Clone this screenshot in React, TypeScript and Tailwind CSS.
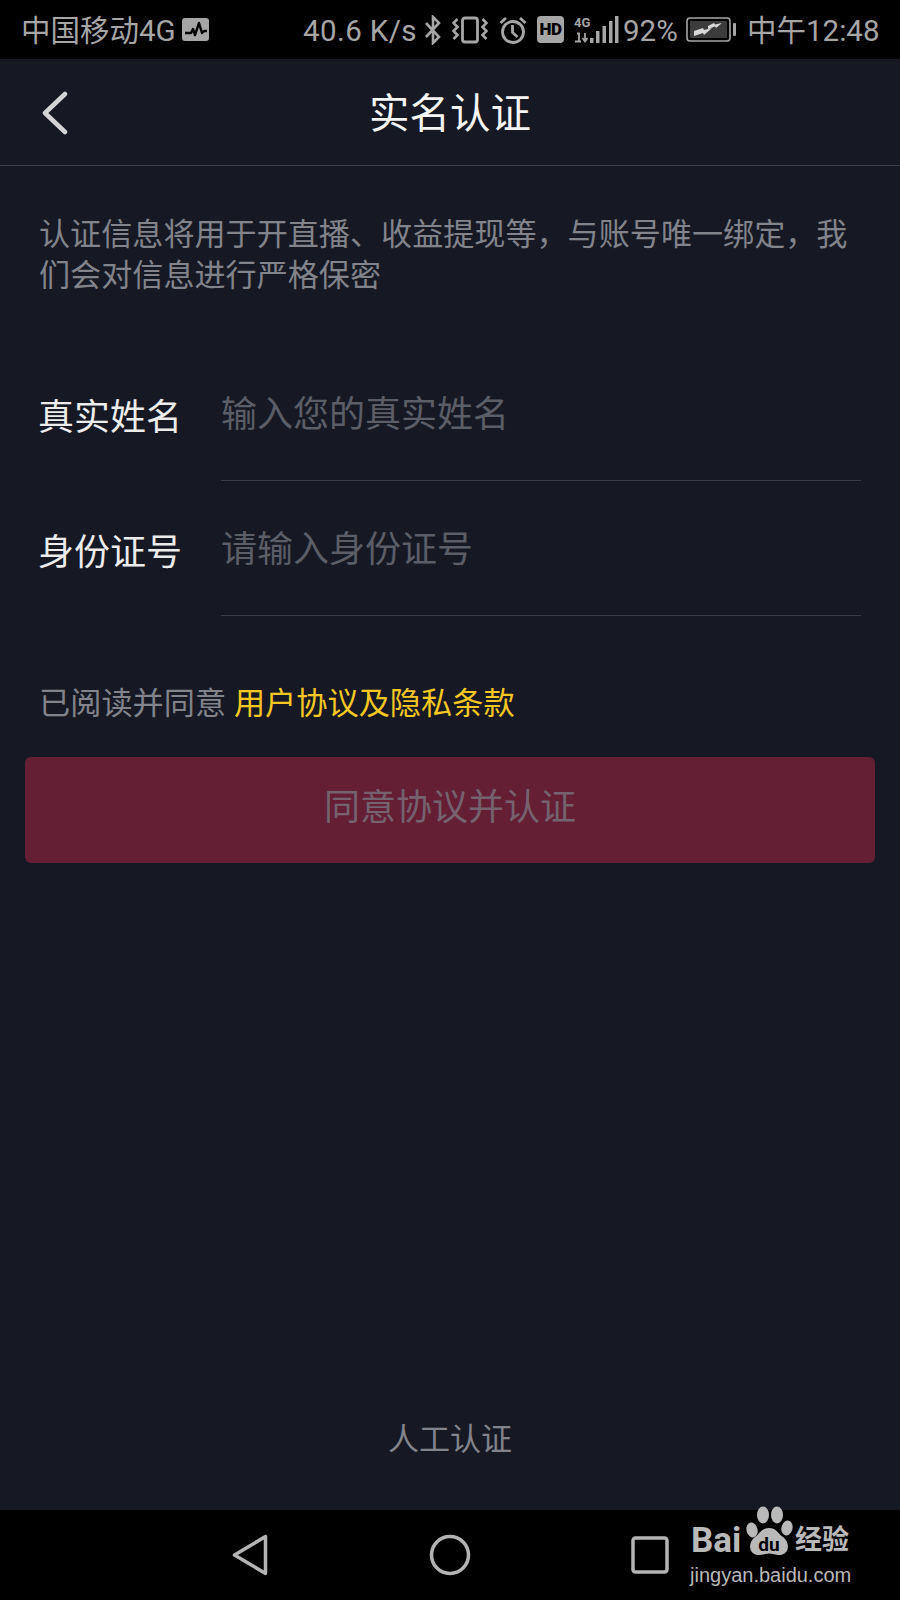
import { ReactNode } from 'react';

function Icon({ w, h, children }: { w: number; h: number; children: ReactNode }) {
  return (
    <svg width={w} height={h} viewBox={`0 0 ${w} ${h}`} fill="none" className="shrink-0">
      {children}
    </svg>
  );
}

function StatusBar() {
  const c = '#a6a6a6';
  return (
    <div className="h-[59px] bg-black flex items-center pl-[21px] text-[#a6a6a6] text-[29.5px] leading-none shrink-0">
      <span className="pt-[5px] w-[153px] whitespace-nowrap shrink-0">中国移动4G</span>
      {/* activity monitor */}
      <div className="ml-[8px]">
        <Icon w={27} h={23}>
          <rect width="27" height="23" rx="3" fill={c} />
          <path d="M3 15h6l2-4 2 6 4-12 3 10 2-2h3" stroke="#000" strokeWidth="2.400" strokeLinejoin="round" />
        </Icon>
      </div>
      <span className="pt-[5px] ml-[94px] w-[112px] whitespace-nowrap tracking-[0.4px] shrink-0">40.6 K/s</span>
      {/* bluetooth */}
      <div className="ml-[8px]">
        <Icon w={20} h={30}>
          <path d="M3 8l13 14-6 6V2l6 6L3 22" stroke={c} strokeWidth="2.600" />
        </Icon>
      </div>
      {/* vibrate */}
      <div className="ml-[9px]">
        <Icon w={36} h={28}>
          <rect x="10.500" y="2" width="15" height="24" rx="2.500" stroke={c} strokeWidth="2.800" />
          <path d="M5.500 3L1.500 7l4 4-4 4 4 4-4 4M30.500 3l4 4-4 4 4 4-4 4 4 4" stroke={c} strokeWidth="2.600" />
        </Icon>
      </div>
      {/* alarm */}
      <div className="ml-[11px]">
        <Icon w={28} h={28}>
          <circle cx="14" cy="16" r="10.500" stroke={c} strokeWidth="2.800" />
          <path d="M13.500 9v7.500l5 4.500M1.500 7L7 2M26.500 7L21 2" stroke={c} strokeWidth="2.800" />
        </Icon>
      </div>
      {/* HD */}
      <div className="ml-[10px] w-[27px] h-[27px] rounded-[4px] bg-[#a6a6a6] flex items-center justify-center text-black text-[17px] font-black tracking-[-0.5px] shrink-0">
        HD
      </div>
      {/* 4G signal */}
      <div className="ml-[10px]">
        <Icon w={45} h={28}>
          <text x="0" y="11" fontSize="13" fontWeight="700" fill={c}>4G</text>
          <path d="M3 17.500h2v8M1 25.500h6M11 17v8M8.500 22l2.500 3.500 2.500-3.500" stroke={c} strokeWidth="1.800" />
          <rect x="16" y="22" width="3.500" height="5" fill={c} />
          <rect x="22" y="15" width="3.500" height="12" fill={c} />
          <rect x="28.500" y="10" width="3.500" height="17" fill={c} />
          <rect x="35" y="5" width="3.500" height="22" fill={c} />
          <rect x="41" y="0" width="3.500" height="27" fill={c} />
        </Icon>
      </div>
      <span className="pt-[5px] ml-[4px] w-[54px] whitespace-nowrap shrink-0">92%</span>
      {/* charging battery */}
      <div className="ml-[9px]">
        <Icon w={50} h={25}>
          <rect x="1" y="1" width="43" height="23" rx="3" stroke={c} strokeWidth="1.600" />
          <rect x="4" y="4" width="37" height="17" rx="1" fill="#3c3c3c" />
          <rect x="47" y="6" width="3" height="13" rx="1" fill={c} />
          <path d="M8 14l9-3 1 2 8-2-8 7-1-2-9 3zM22 9l6-3 1 1.500 7-1.500-6 5-1-1.500-7 2.500z" fill="#d8d8d8" />
        </Icon>
      </div>
      <span className="pt-[5px] ml-[11px] whitespace-nowrap">中午12:48</span>
    </div>
  );
}

function Field({ label, placeholder }: { label: string; placeholder: string }) {
  return (
    <div className="flex h-[135px] pl-[38px] pr-[39px]">
      <div className="w-[183px] pt-[52px] text-[36px] leading-[41px] text-[#ececec] shrink-0">{label}</div>
      <div className="flex-1 border-b border-[#3a3c46]">
        <input
          readOnly
          placeholder={placeholder}
          className="w-full mt-[49px] h-[41px] bg-transparent outline-none text-[36px] leading-[41px] placeholder:text-[#5b5d67]"
        />
      </div>
    </div>
  );
}

function NavBar() {
  const c = '#b4b4b4';
  return (
    <div className="relative h-[90px] bg-black flex items-center shrink-0">
      <div className="ml-[232px]">
        <Icon w={36} h={42}>
          <path d="M33.500 2.500v37L2.500 21z" stroke={c} strokeWidth="3.500" strokeLinejoin="round" />
        </Icon>
      </div>
      <div className="ml-[161px]">
        <Icon w={42} h={42}>
          <circle cx="21" cy="21" r="18.500" stroke={c} strokeWidth="3.500" />
        </Icon>
      </div>
      <div className="ml-[160px]">
        <Icon w={38} h={38}>
          <rect x="2" y="2" width="34" height="34" rx="2.500" stroke={c} strokeWidth="3.500" />
        </Icon>
      </div>

      {/* Baidu jingyan watermark */}
      <div className="absolute left-[690px] top-[-6px] w-[165px] h-[92px] text-[#b9b9b9]">
        <svg width="60" height="54" viewBox="0 0 60 54" className="absolute left-[50px] top-0">
          <ellipse cx="12" cy="26" rx="5.500" ry="7.500" fill="#b9b9b9" transform="rotate(-15 12 26)" />
          <ellipse cx="23" cy="11" rx="6" ry="8.500" fill="#b9b9b9" />
          <ellipse cx="37" cy="11" rx="6" ry="8.500" fill="#b9b9b9" />
          <ellipse cx="47" cy="24" rx="5.500" ry="7.500" fill="#b9b9b9" transform="rotate(15 47 24)" />
          <path d="M29 24c8 0 9 6 14 9 7 5 7 17-3 18-4 .5-7-1.500-11-1.500s-7 2-11 1.500c-10-1-10-13-3-18 5-3 6-9 14-9z" fill="#b9b9b9" />
          <text x="29" y="47" textAnchor="middle" fontSize="19" fontWeight="700" fill="#000">du</text>
        </svg>
        <span className="absolute left-[1px] top-[20px] text-[35px] leading-[34px] font-bold">Bai</span>
        <span className="absolute left-[105px] top-[20px] text-[27px] leading-[32px] font-bold">经验</span>
        <span className="absolute left-0 top-[59px] text-[20px] leading-[24px] whitespace-nowrap font-['Liberation_Sans',sans-serif]">
          jingyan.baidu.com
        </span>
      </div>
    </div>
  );
}

export default function App() {
  return (
    <div className="w-[900px] h-[1600px] flex flex-col bg-[#161924] font-['Roboto','Noto_Sans_CJK_SC',sans-serif]">
      <StatusBar />

      {/* Header */}
      <div className="h-[107px] grid grid-cols-[1fr_auto_1fr] items-center border-b border-[#3f414b] shrink-0">
        <div className="pl-[42px] pt-[2px]">
          <svg width="26" height="44" viewBox="0 0 26 44" fill="none">
            <path d="M23 3L3 22l20 19" stroke="#d4d4d6" strokeWidth="4.500" strokeLinecap="round" strokeLinejoin="round" />
          </svg>
        </div>
        <h1 className="pt-[4px] text-[40.5px] leading-none text-[#f5f5f5] font-normal">实名认证</h1>
        <div />
      </div>

      {/* Content */}
      <div className="flex-1 flex flex-col">
        <p className="mt-[48px] px-[39px] text-[31.1px] leading-[41px] text-[#82838b]">
          认证信息将用于开直播、收益提现等，与账号唯一绑定，我们会对信息进行严格保密
        </p>

        <div className="mt-[50px]">
          <Field label="真实姓名" placeholder="输入您的真实姓名" />
          <Field label="身份证号" placeholder="请输入身份证号" />
        </div>

        <p className="mt-[67px] px-[39px] text-[31.2px] leading-[41px] text-[#82838b]">
          已阅读并同意 <span className="text-[#f5c723]">用户协议及隐私条款</span>
        </p>

        <button className="mt-[33px] mx-[25px] h-[106px] pb-[4px] rounded-[6px] bg-[#641f35] text-[36px] text-[#75626e]">
          同意协议并认证
        </button>

        <div className="mt-auto pb-[50px] text-center text-[31px] leading-[41px] text-[#82838b]">人工认证</div>
      </div>

      <NavBar />
    </div>
  );
}
